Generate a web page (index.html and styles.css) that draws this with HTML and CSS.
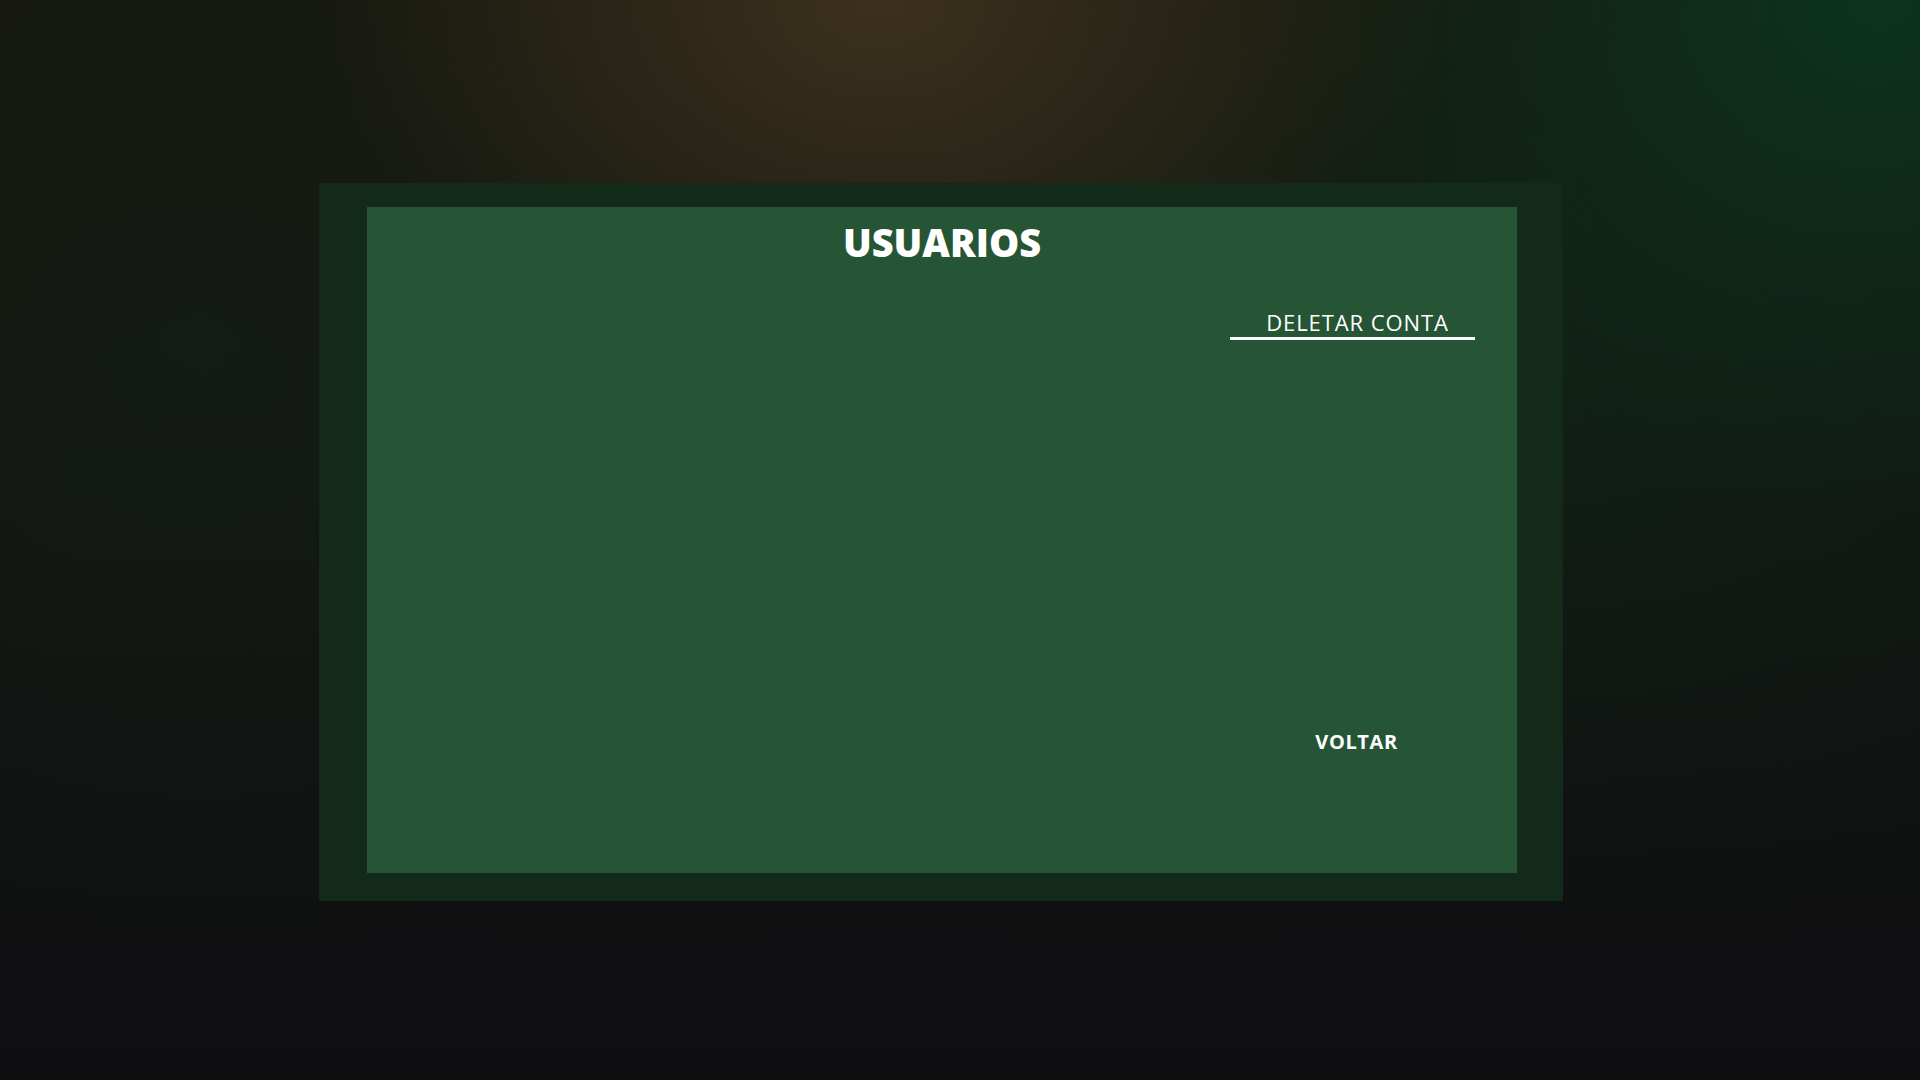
FILE: index.html
```html
<!DOCTYPE html>
<html lang="pt">
<head>
<meta charset="utf-8">
<title>Usuarios</title>
<link rel="stylesheet" href="styles.css">
</head>
<body>
<main class="frame">
  <section class="panel">
    <h1 class="title">USUARIOS</h1>
    <div class="body-row">
      <aside class="actions">
        <a class="delete-link" href="#">DELETAR CONTA</a>
        <button class="back-btn" type="button">VOLTAR</button>
      </aside>
    </div>
  </section>
</main>
</body>
</html>
```

FILE: styles.css
```css
* { box-sizing: border-box; }
html, body { height: 100%; }
body {
  margin: 0;
  font-family: "Open Sans", "Inter", sans-serif;
  color: #fff;
  background:
    radial-gradient(ellipse 560px 420px at 880px 0px, rgba(62, 50, 30, 0.95), rgba(62, 50, 30, 0) 100%),
    radial-gradient(ellipse 620px 520px at 1880px 0px, rgba(12, 52, 32, 0.95), rgba(12, 52, 32, 0) 100%),
    radial-gradient(ellipse 900px 500px at 1500px 380px, rgba(16, 34, 22, 0.8), rgba(16, 34, 22, 0) 100%),
    radial-gradient(ellipse 700px 600px at 200px 350px, rgba(20, 28, 20, 0.9), rgba(20, 28, 20, 0) 100%),
    linear-gradient(180deg, #18180f 0%, #111312 55%, #0f0f11 100%);
  overflow: hidden;
}
.frame {
  padding: 183px 0 0 319px;
}
.panel {
  width: 1244px;
  height: 718px;
  background: #132a1b;
  padding: 24px 46px 28px 48px;
  display: flex;
  flex-direction: column;
}
.title {
  margin: 0;
  background: #265535;
  padding-top: 15px;
  text-align: center;
  font-size: 38px;
  font-weight: 800;
  line-height: 40px;
  letter-spacing: 0;
}
.body-row {
  flex: 1;
  background: #265535;
  display: flex;
  justify-content: flex-end;
  padding-right: 42px;
}
.actions {
  width: 245px;
  display: flex;
  flex-direction: column;
  align-items: center;
  padding-top: 48px;
}
.delete-link {
  display: block;
  width: 100%;
  text-align: center;
  color: #fff;
  text-decoration: none;
  font-size: 22px;
  font-weight: 400;
  line-height: 24px;
  letter-spacing: 0.9px;
  padding-left: 10px;
  padding-bottom: 3px;
  border-bottom: 3px solid #fff;
}
.back-btn {
  margin-top: 390px;
  background: none;
  border: 0;
  color: #fff;
  font-family: inherit;
  font-size: 20px;
  font-weight: 700;
  line-height: 24px;
  letter-spacing: 0.6px;
  padding: 0 0 0 8px;
  cursor: pointer;
}
```
